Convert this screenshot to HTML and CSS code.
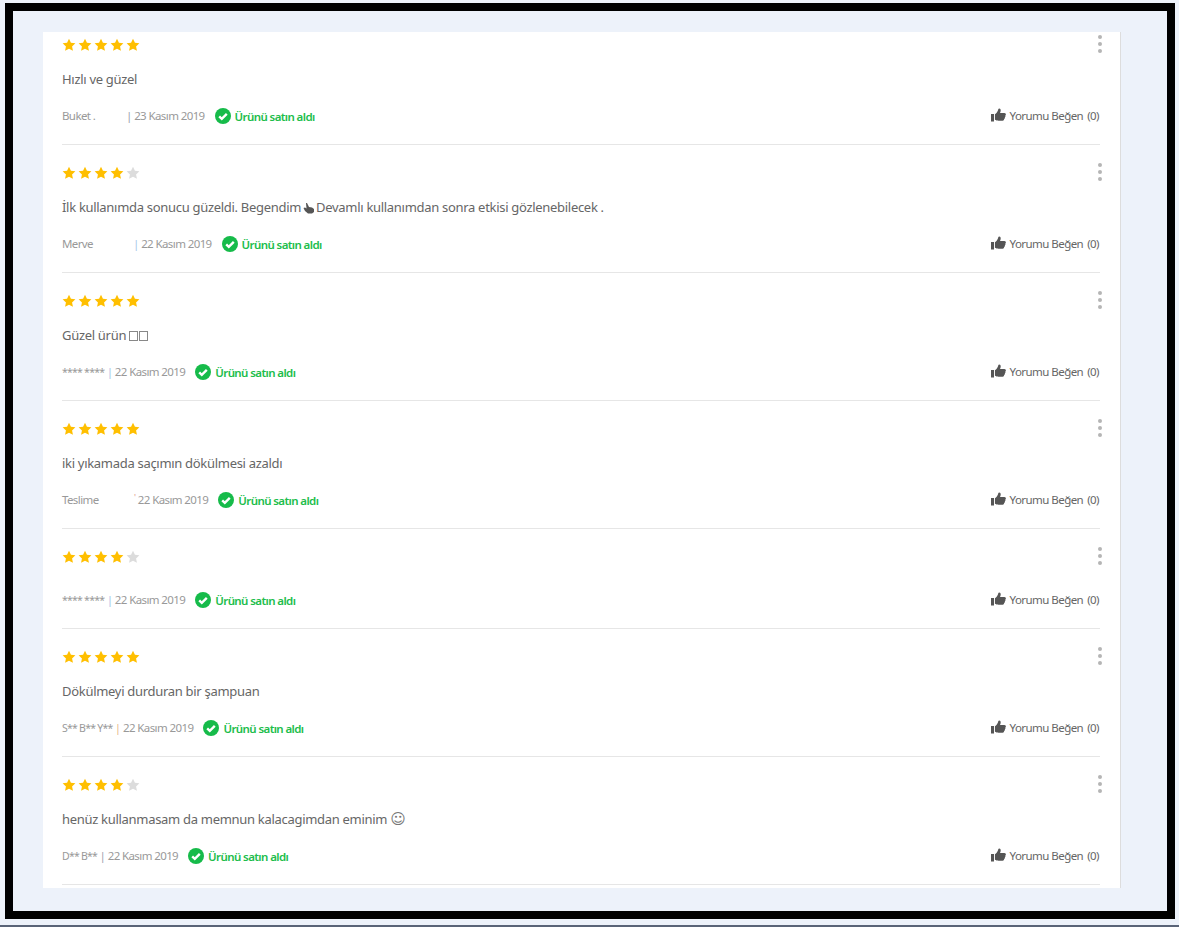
FILE: index.html
```html
<!DOCTYPE html>
<html lang="tr">
<head>
<meta charset="utf-8">
<title>Yorumlar</title>
<link rel="stylesheet" href="styles.css">
</head>
<body>
<svg class="defs" width="0" height="0" aria-hidden="true">
  <defs>
    <symbol id="star" viewBox="0 0 16 16"><path d="M8 .8l2.200 4.700 5.100.6-3.800 3.500 1 5.100L8 12.200l-4.500 2.500 1-5.100L.7 6.100l5.100-.6z"/></symbol>
    <symbol id="check" viewBox="0 0 16 16"><circle cx="8" cy="8" r="8" fill="#16bb4a"/><path d="M4.200 8.300l2.600 2.500 5-5" fill="none" stroke="#fff" stroke-width="2.400"/></symbol>
    <symbol id="thumb" viewBox="0 0 16 14"><path d="M0 6h3.200v8H0zM4.200 6.200c1.500-1 2.800-2.600 3.300-4.200.2-.9.3-2 1.300-2 1.300 0 1.700 1.300 1.500 2.600-.1.800-.4 1.500-.7 2.200h4.700c1 0 1.700.8 1.600 1.700-.1.500-.3.800-.6 1 .3.700.1 1.500-.5 1.900.2.800-.1 1.500-.8 1.800.1.900-.6 1.800-1.600 1.800H8c-1.500 0-2.500-.5-3.800-1z"/></symbol>
  </defs>
</svg>
<main class="frame">
  <section class="card">
    <article class="review first">
      <div class="top"><div class="stars s5"><svg><use href="#star"/></svg><svg><use href="#star"/></svg><svg><use href="#star"/></svg><svg><use href="#star"/></svg><svg><use href="#star"/></svg></div><div class="dots"><i></i><i></i><i></i></div></div>
      <p class="text">Hızlı ve güzel</p>
      <div class="meta"><span class="who"><span class="name n-buket">Buket .</span><span class="pipe">|</span> 23 Kasım 2019</span><span class="bought"><svg><use href="#check"/></svg>Ürünü satın aldı</span><span class="like"><svg><use href="#thumb"/></svg>Yorumu Beğen<span class="count">(0)</span></span></div>
    </article>
    <article class="review">
      <div class="top"><div class="stars s4"><svg><use href="#star"/></svg><svg><use href="#star"/></svg><svg><use href="#star"/></svg><svg><use href="#star"/></svg><svg><use href="#star"/></svg></div><div class="dots"><i></i><i></i><i></i></div></div>
      <p class="text">İlk kullanımda sonucu güzeldi. Begendim<svg class="hand" viewBox="0 0 12 12"><path d="M3 1l1 0 2 4 3 .5 2 1.500 0 3-2 1.500-4 0-3-2.500-1.500-3 1.500-.5 1.500 1z"/></svg>Devamlı kullanımdan sonra etkisi gözlenebilecek .</p>
      <div class="meta"><span class="who"><span class="name n-merve">Merve</span><span class="pipe blue">|</span> 22 Kasım 2019</span><span class="bought"><svg><use href="#check"/></svg>Ürünü satın aldı</span><span class="like"><svg><use href="#thumb"/></svg>Yorumu Beğen<span class="count">(0)</span></span></div>
    </article>
    <article class="review">
      <div class="top"><div class="stars s5"><svg><use href="#star"/></svg><svg><use href="#star"/></svg><svg><use href="#star"/></svg><svg><use href="#star"/></svg><svg><use href="#star"/></svg></div><div class="dots"><i></i><i></i><i></i></div></div>
      <p class="text">Güzel ürün <span class="tofu"></span><span class="tofu"></span></p>
      <div class="meta"><span class="who"><span class="name mask">**** ****</span> <span class="pipe blue">|</span> 22 Kasım 2019</span><span class="bought"><svg><use href="#check"/></svg>Ürünü satın aldı</span><span class="like"><svg><use href="#thumb"/></svg>Yorumu Beğen<span class="count">(0)</span></span></div>
    </article>
    <article class="review">
      <div class="top"><div class="stars s5"><svg><use href="#star"/></svg><svg><use href="#star"/></svg><svg><use href="#star"/></svg><svg><use href="#star"/></svg><svg><use href="#star"/></svg></div><div class="dots"><i></i><i></i><i></i></div></div>
      <p class="text">iki yıkamada saçımın dökülmesi azaldı</p>
      <div class="meta"><span class="who"><span class="name n-teslime">Teslime</span><span class="tick">'</span> 22 Kasım 2019</span><span class="bought"><svg><use href="#check"/></svg>Ürünü satın aldı</span><span class="like"><svg><use href="#thumb"/></svg>Yorumu Beğen<span class="count">(0)</span></span></div>
    </article>
    <article class="review short">
      <div class="top"><div class="stars s4"><svg><use href="#star"/></svg><svg><use href="#star"/></svg><svg><use href="#star"/></svg><svg><use href="#star"/></svg><svg><use href="#star"/></svg></div><div class="dots"><i></i><i></i><i></i></div></div>
      <div class="meta"><span class="who"><span class="name mask">**** ****</span> <span class="pipe blue">|</span> 22 Kasım 2019</span><span class="bought"><svg><use href="#check"/></svg>Ürünü satın aldı</span><span class="like"><svg><use href="#thumb"/></svg>Yorumu Beğen<span class="count">(0)</span></span></div>
    </article>
    <article class="review">
      <div class="top"><div class="stars s5"><svg><use href="#star"/></svg><svg><use href="#star"/></svg><svg><use href="#star"/></svg><svg><use href="#star"/></svg><svg><use href="#star"/></svg></div><div class="dots"><i></i><i></i><i></i></div></div>
      <p class="text">Dökülmeyi durduran bir şampuan</p>
      <div class="meta"><span class="who"><span class="name mask">S** B** Y**</span> <span class="pipe orange">|</span> 22 Kasım 2019</span><span class="bought"><svg><use href="#check"/></svg>Ürünü satın aldı</span><span class="like"><svg><use href="#thumb"/></svg>Yorumu Beğen<span class="count">(0)</span></span></div>
    </article>
    <article class="review">
      <div class="top"><div class="stars s4"><svg><use href="#star"/></svg><svg><use href="#star"/></svg><svg><use href="#star"/></svg><svg><use href="#star"/></svg><svg><use href="#star"/></svg></div><div class="dots"><i></i><i></i><i></i></div></div>
      <p class="text">henüz kullanmasam da memnun kalacagimdan eminim <span class="smile">☺</span></p>
      <div class="meta"><span class="who"><span class="name mask">D** B**</span> <span class="pipe">|</span> 22 Kasım 2019</span><span class="bought"><svg><use href="#check"/></svg>Ürünü satın aldı</span><span class="like"><svg><use href="#thumb"/></svg>Yorumu Beğen<span class="count">(0)</span></span></div>
    </article>
  </section>
</main>
</body>
</html>
```
FILE: styles.css
```css
* { box-sizing: border-box; }
html, body { height: 100%; }
body {
  margin: 0;
  height: 927px;
  overflow: hidden;
  background: #edf2fa;
  border-bottom: 2px solid #5a6478;
  font-family: "Noto Sans", sans-serif;
  color: #666;
}
.defs { position: absolute; }
.frame {
  margin: 3px 4px 0 5px;
  height: 916px;
  border: 8px solid #000;
  padding: 21px 46px 0 30px;
  background: #edf2fa;
}
.card {
  height: 856px;
  padding: 0 20px 0 19px;
  background: #fff;
  border-right: 1px solid #ddd;
  overflow: hidden;
}
.review {
  height: 128px;
  padding-top: 20px;
  border-bottom: 1px solid #e6e6e6;
}
.review.first { height: 113px; padding-top: 5px; }
.review.short { height: 100px; }
.top { display: flex; justify-content: space-between; align-items: center; height: 16px; }
.stars { display: flex; }
.stars svg { width: 14px; height: 14px; margin-right: 2px; fill: #ffbf00; }
.s4 svg:last-child { fill: #dcdcdc; }
.dots { display: flex; flex-direction: column; gap: 3px; width: 4px; margin: -3px -2px 0 0; }
.dots i { width: 4px; height: 4px; border-radius: 50%; background: #b5b5b5; }
.text {
  margin: 15px 0 0;
  height: 22px;
  font-size: 13px;
  line-height: 22px;
  letter-spacing: -0.3px;
  color: #666;
  white-space: nowrap;
}
.hand { width: 12px; height: 12px; margin: 0 1px 0 2px; vertical-align: -2px; fill: #555; }
.tofu { display: inline-block; width: 9px; height: 10px; margin-right: 1px; border: 1px solid #888; vertical-align: -1px; }
.smile { font-family: "DejaVu Sans", sans-serif; font-size: 15px; line-height: 1; letter-spacing: 0; color: #777; }
.meta {
  display: flex;
  align-items: center;
  margin-top: 18px;
  height: 16px;
  font-size: 11.5px;
  letter-spacing: -0.6px;
  color: #999;
  white-space: nowrap;
}
.short .meta { margin-top: 27px; }
.name { display: inline-block; color: #999; }
.mask { font-size: 10.5px; letter-spacing: -0.75px; }
.n-buket { width: 64px; }
.n-merve { width: 71px; }
.n-teslime { width: 72px; }
.pipe { color: #9aa3ad; }
.pipe.blue { color: #a6c6e8; }
.pipe.orange { color: #e8bb8c; }
.tick { color: #e29a8a; font-size: 9px; vertical-align: 3px; }
.who { position: relative; top: -1px; }
.bought {
  display: flex;
  align-items: center;
  margin-left: 10px;
  font-weight: 600;
  letter-spacing: -0.6px;
  color: #20bd4b;
}
.bought svg { width: 16px; height: 16px; margin-right: 4px; }
.like { display: flex; align-items: center; margin: 0 1px 0 auto; color: #666; position: relative; top: -1px; letter-spacing: -0.55px; }
.like svg { width: 15px; height: 14px; margin-right: 4px; fill: #555; }
.count { margin-left: 4px; }
```
